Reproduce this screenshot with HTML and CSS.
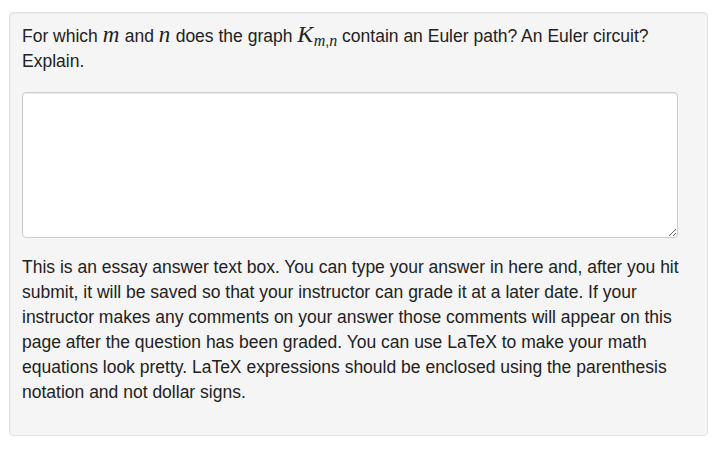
FILE: index.html
```html
<!DOCTYPE html>
<html>
<head>
<meta charset="utf-8">
<link rel="stylesheet" href="styles.css">
</head>
<body>
<div class="page">
  <div class="well">
    <div class="question">For which <span class="mi">m</span> and <span class="mi">n</span> does the graph <span class="mi big">K</span><sub class="sub"><span class="mi">m</span>,<span class="mi">n</span></sub> contain an Euler path? An Euler circuit? Explain.</div>
    <textarea class="answer"></textarea>
    <p class="help">This is an essay answer text box. You can type your answer in here and, after you hit submit, it will be saved so that your instructor can grade it at a later date. If your instructor makes any comments on your answer those comments will appear on this page after the question has been graded. You can use LaTeX to make your math equations look pretty. LaTeX expressions should be enclosed using the parenthesis notation and not dollar signs.</p>
  </div>
</div>
</body>
</html>
```
FILE: styles.css
```css
html, body {
  margin: 0;
  padding: 0;
  background: #fff;
}
.page {
  padding: 12px 13px 0 9px;
  font-family: "Liberation Sans", Arial, sans-serif;
  font-size: 17.5px;
  line-height: 25px;
  color: #222;
}
.well {
  background: #f5f5f5;
  border: 1px solid #e3e3e3;
  border-radius: 4px;
  padding: 11px 19px 30px 12px;
  box-shadow: inset 0 1px 1px rgba(0,0,0,0.05);
}
.question {
  margin: 0;
}
.mi {
  font-family: "Liberation Serif", "DejaVu Serif", serif;
  font-style: italic;
  font-size: 23px;
  line-height: 18px;
  letter-spacing: 0.5px;
}
.big {
  font-size: 24px;
}
.sub {
  font-size: 14px;
  line-height: 0;
  vertical-align: -4px;
}
.sub .mi {
  font-size: 16px;
  line-height: 12px;
  letter-spacing: 0;
}
.answer {
  display: block;
  box-sizing: border-box;
  width: 656px;
  height: 146px;
  margin: 18px 0 0 0;
  border: 1px solid #ccc;
  border-radius: 4px;
  background: #fff;
  padding: 6px 12px;
  font-family: "Liberation Sans", Arial, sans-serif;
  font-size: 14px;
  box-shadow: inset 0 1px 1px rgba(0,0,0,0.075);
}
.help {
  margin: 17px 0 0 0;
}
```
